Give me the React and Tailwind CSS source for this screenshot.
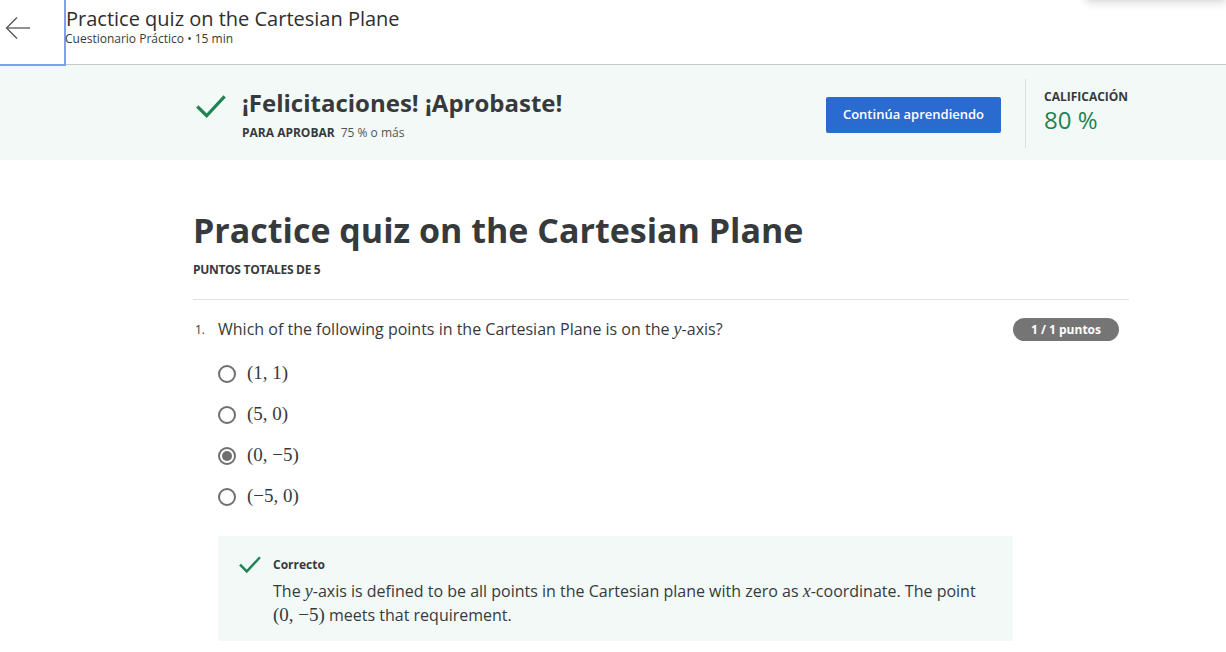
import React from "react";

function M({ children }) {
  return <span className="font-['Liberation_Serif',serif] text-[19px]">{children}</span>;
}
function I({ children }) {
  return <span className="font-['Liberation_Serif',serif] italic text-[18px]">{children}</span>;
}

function Check({ className }) {
  return (
    <svg viewBox="0 0 24 24" className={className} fill="none" stroke="currentColor" strokeWidth="2.6" strokeLinecap="square">
      <path d="M2 12.5 L8.5 19 L22 4.5" />
    </svg>
  );
}

function Radio({ checked }) {
  return (
    <span className="w-[18px] h-[18px] rounded-full border-2 border-[#6f6f6f] flex items-center justify-center shrink-0">
      {checked && <span className="w-[10px] h-[10px] rounded-full bg-[#6f6f6f]" />}
    </span>
  );
}

export default function App() {
  const opts = [
    ["(1, 1)", false],
    ["(5, 0)", false],
    ["(0, −5)", true],
    ["(−5, 0)", false],
  ];
  return (
    <div className="w-[1226px] h-[652px] overflow-hidden bg-white text-[#373a3c] font-['Open_Sans',sans-serif] relative">
      <div className="absolute right-0 top-[-20px] w-[140px] h-[20px] shadow-[0_2px_10px_rgba(0,0,0,0.18)] bg-white" />
      {/* header */}
      <div className="h-[65px] flex border-b border-[#c8c8c8]">
        <div className="w-[66px] h-[66px] border-r-2 border-b-2 border-[#7f9ff2] flex items-start pt-[15px] pl-[5px] shrink-0">
          <svg width="26" height="26" viewBox="0 0 26 26" fill="none" stroke="#555" strokeWidth="1.3">
            <path d="M2 13 H25" />
            <path d="M12 2.5 L1.5 13 L12 23.5" />
          </svg>
        </div>
        <div className="pt-[5px]">
          <div className="text-[20px] leading-[28px] text-[#2e2e2e]">Practice quiz on the Cartesian Plane</div>
          <div className="text-[12px] leading-[16px] text-[#373a3c] -mt-[2px] -ml-[1px]">Cuestionario Práctico • 15 min</div>
        </div>
      </div>

      {/* banner */}
      <div className="h-[95px] bg-[#f2f9f7] flex">
        <div className="w-[193px] shrink-0" />
        <div className="w-[936px] flex">
          <div className="flex-1 flex pt-[23px]">
            <Check className="w-[30px] h-[30px] text-[#1f8354] ml-[3px] mt-[4px]" />
            <div className="ml-[16px]">
              <div className="text-[24px] font-bold leading-[30px] text-[#373a3c]">¡Felicitaciones! ¡Aprobaste!</div>
              <div className="text-[12px] mt-[7px] leading-[16px]">
                <span className="font-bold">PARA APROBAR</span>
                <span className="ml-[6px] text-[#555]">75 % o más</span>
              </div>
            </div>
          </div>
          <div className="pt-[32px] pr-[24px]">
            <button className="w-[175px] h-[36px] bg-[#2a6bcf] rounded-[2px] text-white text-[13px] font-semibold">Continúa aprendiendo</button>
          </div>
          <div className="pt-[14px] pb-[12px]">
            <div className="h-full border-l border-[#dcdcdc]" />
          </div>
          <div className="w-[103px] pl-[18px] pt-[24px]">
            <div className="text-[12px] font-bold leading-[16px]">CALIFICACIÓN</div>
            <div className="text-[24px] leading-[24px] text-[#1f8354] mt-[3px]">80 %</div>
          </div>
        </div>
      </div>

      {/* main */}
      <div className="pl-[193px]">
        <div className="w-[936px]">
          <h1 className="text-[34px] font-bold leading-[46px] mt-[47px] text-[#373a3c]">Practice quiz on the Cartesian Plane</h1>
          <div className="text-[12px] font-bold mt-[9px] leading-[16px] tracking-[-0.3px]">PUNTOS TOTALES DE 5</div>
          <div className="border-t border-[#e0e0e0] mt-[21px]" />

          <div className="flex items-center mt-[16px]">
            <span className="text-[12px] w-[25px] pl-[2px]">1.</span>
            <span className="text-[16px] flex-1">Which of the following points in the Cartesian Plane is on the <I>y</I>-axis?</span>
            <span className="bg-[#757575] text-white text-[12px] font-bold rounded-full w-[106px] h-[23px] flex items-center justify-center mr-[10px]">1 / 1 puntos</span>
          </div>

          <div className="pl-[25px] mt-[10px] flex flex-col">
            {opts.map(([t, c]) => (
              <div key={t} className="flex items-center h-[41px] gap-[11px]">
                <Radio checked={c} />
                <M>{t}</M>
              </div>
            ))}
          </div>

          <div className="ml-[25px] mt-[19px] w-[795px] h-[105px] bg-[#f2f9f7] pl-[21px] pt-[18px]">
            <div className="flex items-center">
              <Check className="w-[22px] h-[22px] text-[#1f8354]" />
              <span className="text-[12px] font-bold ml-[12px]">Correcto</span>
            </div>
            <div className="pl-[34px] text-[16px] leading-[24px] mt-[3px] pr-[20px]">
              The <I>y</I>-axis is defined to be all points in the Cartesian plane with zero as <I>x</I>-coordinate. The point <M>(0, −5)</M> meets that requirement.
            </div>
          </div>
        </div>
      </div>
    </div>
  );
}
